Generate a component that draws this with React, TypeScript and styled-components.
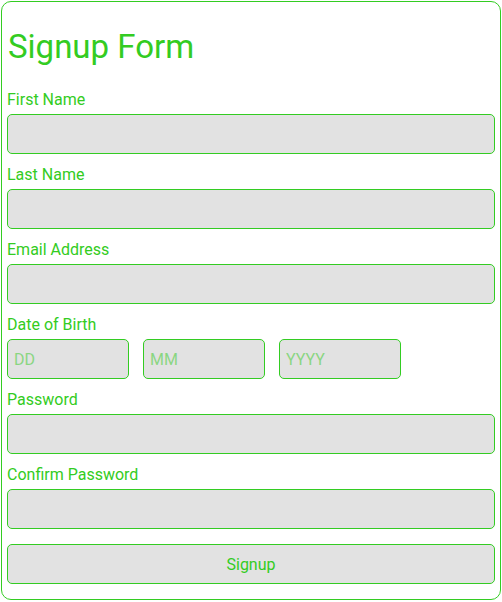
import React from "react";
import styled, { createGlobalStyle } from "styled-components";

const GREEN = "#33cc22";

const Global = createGlobalStyle`
  html, body { margin: 0; padding: 0; background: #fff; }
  body { font-family: Roboto, "Liberation Sans", sans-serif; }
  * { box-sizing: border-box; }
`;

const Card = styled.form`
  width: 500px;
  margin: 1px 0 0 1px;
  padding: 0 5px 15px 5px;
  border: 1px solid ${GREEN};
  border-radius: 10px;
  background: #fff;
  display: flex;
  flex-direction: column;
`;

const Title = styled.h1`
  margin: 26px 0 24px 1px;
  font-size: 33px;
  font-weight: 400;
  line-height: 38px;
  color: ${GREEN};
`;

const Field = styled.div`
  display: flex;
  flex-direction: column;
  margin-bottom: 11px;
`;

const Label = styled.label`
  display: block;
  font-size: 16px;
  line-height: 19px;
  margin: 0 0 5px 0;
  color: ${GREEN};
`;

const Input = styled.input<{ $narrow?: boolean }>`
  width: ${(p) => (p.$narrow ? "25%" : "100%")};
  height: 40px;
  padding: 0 6px;
  border: 1px solid ${GREEN};
  border-radius: 5px;
  background: #e2e2e2;
  font-family: Roboto, "Liberation Sans", sans-serif;
  font-size: 16px;
  color: ${GREEN};
  outline: none;
  &::placeholder {
    color: ${GREEN};
    opacity: 0.5;
  }
`;

const DateRow = styled.div`
  display: flex;
  gap: 14px;
`;

const Button = styled.button`
  margin-top: 4px;
  width: 100%;
  height: 40px;
  border: 1px solid ${GREEN};
  border-radius: 5px;
  background: #e2e2e2;
  font-family: Roboto, "Liberation Sans", sans-serif;
  font-size: 16px;
  color: ${GREEN};
  cursor: pointer;
`;

const fields = ["First Name", "Last Name", "Email Address"];

export default function App() {
  return (
    <>
      <Global />
      <Card onSubmit={(e) => e.preventDefault()}>
        <Title>Signup Form</Title>
        {fields.map((f) => (
          <Field key={f}>
            <Label>{f}</Label>
            <Input />
          </Field>
        ))}
        <Field>
          <Label>Date of Birth</Label>
          <DateRow>
            <Input $narrow placeholder="DD" />
            <Input $narrow placeholder="MM" />
            <Input $narrow placeholder="YYYY" />
          </DateRow>
        </Field>
        <Field>
          <Label>Password</Label>
          <Input type="password" />
        </Field>
        <Field>
          <Label>Confirm Password</Label>
          <Input type="password" />
        </Field>
        <Button type="submit">Signup</Button>
      </Card>
    </>
  );
}
